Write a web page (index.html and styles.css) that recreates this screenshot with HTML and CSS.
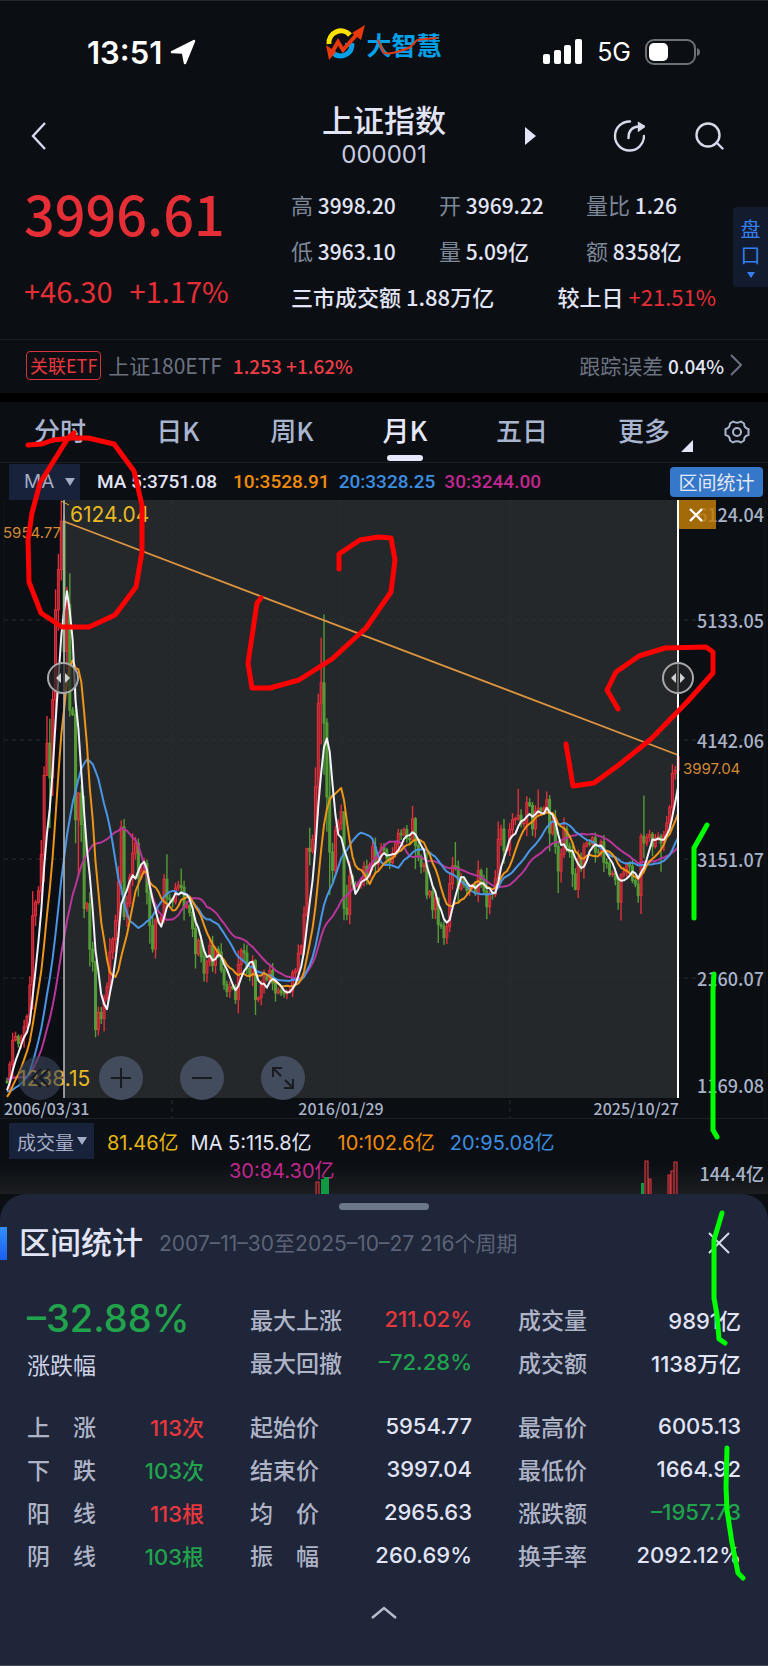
FILE: index.html
```html
<!DOCTYPE html>
<html lang="zh-CN">
<head>
    <meta charset="UTF-8">
    <meta name="viewport" content="width=device-width, initial-scale=1.0">
    <title>上证指数 000001</title>
    <link rel="stylesheet" href="styles.css">
</head>
<body>
<div class="app">

    <!-- 状态栏 -->
    <div class="status-bar">
        <div class="status-left">
            <span class="time">13:51</span>
            <svg width="26" height="26" viewBox="0 0 26 26"><path d="M2 13 L24 2 L15 24 L13 13.500 Z" fill="#fff" stroke="#fff" stroke-width="2.500" stroke-linejoin="round"/></svg>
        </div>
        <div class="logo">
            <svg width="40" height="38" viewBox="0 0 40 38" fill="none">
                <path d="M3 19 A12 12 0 0 1 24 10" stroke="#ffe100" stroke-width="5"/>
                <path d="M7 28 A11.500 11.500 0 0 0 26 19" stroke="#00a0e9" stroke-width="5"/>
                <path d="M28 20 H19" stroke="#00a0e9" stroke-width="4"/>
                <path d="M4 31 L12 17 L17 25 L32 8" stroke="#e8380d" stroke-width="4"/>
                <path d="M0 20 L3 35 L10 27 Z M26 8 L39 0 L35 15 Z" fill="#e8380d"/>
            </svg>
            <span class="logo-name">大智慧
                <svg class="logo-line" viewBox="0 0 76 26" fill="none"><path d="M12 9 L18 22 Q22 24 32 21 L44 17 L52 9 L72 7" stroke="#e8380d" stroke-width="2"/></svg>
            </span>
        </div>
        <div class="status-right">
            <svg width="40" height="26" viewBox="0 0 40 26" fill="#fff">
                <rect x="0" y="15" width="7" height="10" rx="2"/>
                <rect x="11" y="11" width="7" height="14" rx="2"/>
                <rect x="21" y="6" width="7" height="19" rx="2"/>
                <rect x="32" y="0" width="7" height="25" rx="2"/>
            </svg>
            <span class="net">5G</span>
            <svg width="56" height="26" viewBox="0 0 56 26">
                <rect x="1" y="1" width="49" height="24" rx="8" fill="none" stroke="#6d7074" stroke-width="2"/>
                <rect x="4" y="4" width="19" height="18" rx="5" fill="#fff"/>
                <path d="M52 9 Q55 10 55 13 Q55 16 52 17 Z" fill="#6d7074"/>
            </svg>
        </div>
    </div>

    <!-- 标题栏 -->
    <header class="title-bar">
        <button class="icon-btn back" aria-label="返回">
            <svg width="16" height="28" viewBox="0 0 16 28" fill="none" stroke="#d6daf0" stroke-width="2.4"><path d="M14 1 L2 14 L14 27"/></svg>
        </button>
        <div class="title">
            <h1>上证指数</h1>
            <p>000001</p>
        </div>
        <div class="title-actions">
            <button class="icon-btn next" aria-label="下一个">
                <svg width="11" height="18" viewBox="0 0 11 18"><path d="M0 0 L11 9 L0 18 Z" fill="#e2e5fb"/></svg>
            </button>
            <button class="icon-btn share" aria-label="分享">
                <svg width="32" height="32" viewBox="0 0 32 32" fill="none" stroke="#d6d9ea" stroke-width="2.4" stroke-linecap="round"><path d="M17 1.500 A14.500 14.500 0 1 0 31 16"/><path d="M15.500 18 Q15.500 7 26 6.500"/><path d="M26 3.500 L31 6.500 L26 10 Z" fill="#d6d9ea"/></svg>
            </button>
            <button class="icon-btn" aria-label="搜索">
                <svg width="29" height="28" viewBox="0 0 29 28" fill="none" stroke="#d6d9ea" stroke-width="2.4" stroke-linecap="round"><circle cx="13" cy="13" r="11.500"/><path d="M21.500 20.500 L27.500 26.500"/></svg>
            </button>
        </div>
    </header>

    <!-- 行情 -->
    <section class="quote">
        <div class="price-box">
            <div class="price">3996.61</div>
            <div class="change"><span>+46.30</span><span>+1.17%</span></div>
        </div>
        <div class="quote-grid">
            <div class="cell"><span>高</span> 3998.20</div>
            <div class="cell"><span>开</span> 3969.22</div>
            <div class="cell"><span>量比</span> 1.26</div>
            <div class="cell"><span>低</span> 3963.10</div>
            <div class="cell"><span>量</span> 5.09亿</div>
            <div class="cell"><span>额</span> 8358亿</div>
            <div class="total">
                <div>三市成交额 1.88万亿</div>
                <div>较上日 <b>+21.51%</b></div>
            </div>
        </div>
        <button class="pankou">盘<br>口<i class="caret"></i></button>
    </section>

    <a class="etf" href="#">
        <span class="tag">关联ETF</span>
        <span class="etf-name">上证180ETF</span>
        <span class="etf-value">1.253 +1.62%</span>
        <span class="etf-error">跟踪误差 <b>0.04%</b></span>
        <svg width="12" height="22" viewBox="0 0 12 22" fill="none" stroke="#6b7280" stroke-width="2"><path d="M1 1 L11 11 L1 21"/></svg>
    </a>

    <!-- 周期 -->
    <nav class="tabs">
        <button>分时</button>
        <button>日K</button>
        <button>周K</button>
        <button class="active">月K</button>
        <button>五日</button>
        <button class="more">更多</button>
        <button class="gear" aria-label="设置">
            <svg width="26" height="24" viewBox="0 0 26 24" fill="none" stroke="#a9b4cf" stroke-width="2" stroke-linejoin="round"><path d="M9 1.500 Q13 4 17 1.500 L20 3.500 Q20 8 24.500 9 V15 Q20 16 20 20.500 L17 22.500 Q13 20 9 22.500 L6 20.500 Q6 16 1.500 15 V9 Q6 8 6 3.500 Z"/><circle cx="13" cy="12" r="4"/></svg>
        </button>
    </nav>

    <div class="ma-row">
        <button class="pick">MA<i class="caret"></i></button>
        <span class="ma-5">MA 5:3751.08</span>
        <span class="orange">10:3528.91</span>
        <span class="blue">20:3328.25</span>
        <span class="pink">30:3244.00</span>
        <button class="range-btn">区间统计</button>
    </div>

    <!-- K线图 -->
    <div class="chart">
        <svg class="chart-svg" viewBox="0 0 768 618">
            <rect x="64" y="0" width="614" height="598" fill="#24282b"/>
            <g class="grid">
                <path d="M4 120 H765 M4 240 H765 M4 359 H765 M4 478 H765"/>
                <path d="M172 0 V618 M341 0 V618 M510 0 V618"/>
            </g>
            <path class="frame" d="M4 0 V618 M765 0 V618"/>
            <g id="candles"></g>
            <g id="lines" class="ma-lines"></g>
            <path d="M63 21 L678 255" stroke="#dd9440" stroke-width="1.800"/>
            <path d="M61 1 L69 5" stroke="#e2b51f"/>
            <path d="M64 0 V598" stroke="#b4b5b8" stroke-width="1.600"/>
            <path d="M678 0 V598" stroke="#fff" stroke-width="2"/>
            <g class="handle">
                <circle cx="63" cy="178" r="15"/><path d="M61 173 V183 L56 178 Z M65 173 V183 L70 178 Z"/>
                <circle cx="678" cy="178" r="15"/><path d="M676 173 V183 L671 178 Z M680 173 V183 L685 178 Z"/>
            </g>
            <text class="extreme" x="70" y="22">6124.04</text>
            <text class="extreme" x="18" y="586">1238.15</text>
            <text class="point" x="3" y="38">5954.77</text>
            <text class="point" x="683" y="274">3997.04</text>
            <g class="axis">
                <text x="764" y="22">6124.04</text>
                <text x="764" y="128">5133.05</text>
                <text x="764" y="248">4142.06</text>
                <text x="764" y="367">3151.07</text>
                <text x="764" y="486">2160.07</text>
                <text x="764" y="593">1169.08</text>
            </g>
            <g class="dates">
                <text x="4" y="615">2006/03/31</text>
                <text x="341" y="615" text-anchor="middle">2016/01/29</text>
                <text x="679" y="615" text-anchor="end">2025/10/27</text>
            </g>
        </svg>
        <button class="range-close" aria-label="关闭区间">
            <svg width="14" height="14" viewBox="0 0 14 14" stroke="#fff" stroke-width="2.400"><path d="M1 1 L13 13 M13 1 L1 13"/></svg>
        </button>
        <div class="chart-tools">
            <button class="faded" aria-label="收起"><svg width="22" height="22" viewBox="0 0 22 22"><path d="M12 2 L3 11 L12 20 M20 2 L11 11 L20 20"/></svg></button>
            <button aria-label="放大"><svg width="22" height="22" viewBox="0 0 22 22"><path d="M11 1 V21 M1 11 H21"/></svg></button>
            <button aria-label="缩小"><svg width="22" height="22" viewBox="0 0 22 22"><path d="M1 11 H21"/></svg></button>
            <button aria-label="全屏"><svg width="22" height="22" viewBox="0 0 22 22"><path d="M1 10 V1 H10 M1 1 L9 9 M21 12 V21 H12 M21 21 L13 13"/></svg></button>
        </div>
    </div>

    <!-- 成交量 -->
    <div class="volume">
        <button class="pick">成交量<i class="caret"></i></button>
        <div class="volume-values">
            <div><span class="yellow">81.46亿</span><span class="vol-ma">MA 5:115.8亿</span><span class="orange vol-10">10:102.6亿</span><span class="blue">20:95.08亿</span></div>
            <div class="pink vol-30">30:84.30亿</div>
        </div>
        <span class="vol-axis">144.4亿</span>
        <svg class="vol-bars" viewBox="0 0 768 40">
            <path d="M321 25 h3 v15 h-3 Z M324 23 h5 v17 h-5 Z M641 29 h3 v11 h-3 Z" fill="#0f9a43"/>
            <path d="M316 41 V28 h3 V41 M645 41 V7 h3 V41 M649 41 V25 h2 V41 M668 41 V21 h2 V41 M671 41 V17 h3 V41 M674 41 V8 h3 V41" fill="#3a1a1e" stroke="#c9363c" stroke-width="1.200"/>
        </svg>
    </div>

    <!-- 区间统计面板 -->
    <section class="sheet">
        <div class="grip"></div>
        <div class="sheet-head">
            <h2>区间统计</h2>
            <p>2007–11–30至2025–10–27 216个周期</p>
            <button class="icon-btn" aria-label="关闭">
                <svg width="22" height="22" viewBox="0 0 22 22" stroke="#d6d9ea" stroke-width="2"><path d="M1 1 L21 21 M21 1 L1 21"/></svg>
            </button>
        </div>
        <div class="stats top">
            <div class="range-change">
                <strong class="down">–32.88%</strong>
                <span>涨跌幅</span>
            </div>
            <dl>
                <div><dt>最大上涨</dt><dd class="up">211.02%</dd></div>
                <div><dt>最大回撤</dt><dd class="down">–72.28%</dd></div>
            </dl>
            <dl>
                <div><dt>成交量</dt><dd>9891亿</dd></div>
                <div><dt>成交额</dt><dd>1138万亿</dd></div>
            </dl>
        </div>
        <div class="stats">
            <dl>
                <div><dt>上　涨</dt><dd class="up">113次</dd></div>
                <div><dt>下　跌</dt><dd class="down">103次</dd></div>
                <div><dt>阳　线</dt><dd class="up">113根</dd></div>
                <div><dt>阴　线</dt><dd class="down">103根</dd></div>
            </dl>
            <dl>
                <div><dt>起始价</dt><dd>5954.77</dd></div>
                <div><dt>结束价</dt><dd>3997.04</dd></div>
                <div><dt>均　价</dt><dd>2965.63</dd></div>
                <div><dt>振　幅</dt><dd>260.69%</dd></div>
            </dl>
            <dl>
                <div><dt>最高价</dt><dd>6005.13</dd></div>
                <div><dt>最低价</dt><dd>1664.92</dd></div>
                <div><dt>涨跌额</dt><dd class="down">–1957.73</dd></div>
                <div><dt>换手率</dt><dd>2092.12%</dd></div>
            </dl>
        </div>
        <button class="icon-btn expand" aria-label="展开">
            <svg width="26" height="14" viewBox="0 0 26 14" fill="none" stroke="#b9bdcc" stroke-width="2.400"><path d="M1 12 L13 2 L25 12"/></svg>
        </button>
    </section>

    <!-- 手绘标注 -->
    <svg class="marks" viewBox="0 0 768 1666">
        <g stroke="#ff0000">
            <path d="M28 445 L42 444 L53 440 L72 438 H88 L114 444 L134 471 L142 505 V552 L136 587 L115 615 L89 627 H62 L41 613 L29 582 L28 540 L32 513 L40 483 L68 438 L74 433"/>
            <path d="M339 569 V554 L360 540 L378 537 L391 538 L395 560 L391 592 L366 628 L332 659 L299 680 L270 688 H252 L248 663 L257 603 L261 598"/>
            <path d="M618 709 L607 690 L616 672 L639 656 L665 648 L706 647 L713 652 V673 L688 701 L651 739 L620 764 L594 783 L573 786 L566 744"/>
        </g>
        <g stroke="#00ff00">
            <path d="M707 825 L694 848 V918"/>
            <path d="M714 974 L713 990 V1130 L717 1137"/>
            <path d="M722 1213 L714 1240 V1298 L717 1315 L719 1339 L725 1343"/>
            <path d="M727 1448 L726 1487 L727 1510 L732 1543 L738 1573 L743 1578"/>
        </g>
    </svg>
</div>
<script src="chart.js"></script>
</body>
</html>
```
FILE: styles.css
```css
* {
    box-sizing: border-box;
}

body {
    margin: 0;
    background-color: #0b0e13;
    color: #e2e5f7;
    font-family: "Noto Sans CJK SC", sans-serif;
}

h1, h2, p, dl, dd {
    margin: 0;
    font-weight: 500;
}

button {
    font-family: inherit;
    border: none;
    background: none;
    padding: 0;
    color: inherit;
    cursor: pointer;
}

svg {
    display: block;
}

.app {
    position: relative;
    border-top: 1px solid #24272c;
}

.orange { color: #f08c0c; }
.blue { color: #3b8fe0; }
.pink { color: #c0278f; }
.yellow { color: #e5b710; }
.up { color: #e8383d; }
.down { color: #21a34c; }

.caret {
    display: inline-block;
    border: 5px solid transparent;
    border-top: 8px solid currentColor;
    border-bottom: 0;
}

.icon-btn {
    flex: none;
}

/* 状态栏 */
.status-bar {
    display: grid;
    grid-template-columns: 1fr auto 1fr;
    align-items: center;
    height: 95px;
    padding: 7px 67px 0;
    font-family: Inter, sans-serif;
}

.status-left, .status-right {
    display: flex;
    align-items: center;
    height: 40px;
}

.status-left {
    gap: 8px;
    padding-left: 20px;
}

.status-right {
    justify-content: flex-end;
    gap: 14px;
}

.time {
    font-size: 31px;
    font-weight: 600;
    color: #fff;
}

.net {
    font-size: 25px;
    color: #fff;
}

.logo {
    display: flex;
    align-items: center;
    margin-bottom: 17px;
}

.logo-name {
    position: relative;
    color: #00a0e9;
    font-family: "Noto Sans CJK SC", sans-serif;
    font-size: 25px;
    line-height: 30px;
    font-weight: 700;
    white-space: nowrap;
}

.logo-line {
    position: absolute;
    left: 0;
    top: 2px;
    width: 100%;
}

/* 标题栏 */
.title-bar {
    display: grid;
    grid-template-columns: 1fr auto 1fr;
    align-items: center;
    height: 84px;
    padding: 0 44px 4px 31px;
}

.back {
    justify-self: start;
}

.title {
    text-align: center;
    padding: 0 0 6px 13px;
}

.title h1 {
    font-size: 31px;
    line-height: 44px;
}

.title p {
    font-family: Inter, sans-serif;
    font-size: 24px;
    line-height: 28px;
    font-weight: 400;
    color: #c8cce0;
}

.title-actions {
    display: flex;
    align-items: center;
    justify-content: flex-end;
}

.next {
    margin-right: 77px;
}

.share {
    margin-right: 50px;
}

/* 行情 */
.quote {
    position: relative;
    display: grid;
    grid-template-columns: 291fr 477fr;
    height: 160px;
    border-bottom: 1px solid #1a1d22;
}

.price-box {
    padding-left: 24px;
    color: #e62e36;
}

.price {
    font-size: 54px;
    line-height: 66px;
    font-weight: 500;
}

.change {
    display: flex;
    gap: 17px;
    margin-top: 20px;
    font-size: 29px;
    line-height: 48px;
}

.quote-grid {
    display: grid;
    grid-template-columns: 148fr 147fr 182fr;
    grid-auto-rows: 46px;
    align-items: center;
    padding-top: 1px;
    font-size: 21px;
    font-weight: 500;
    white-space: nowrap;
}

.cell span {
    color: #7c8798;
    font-size: 22px;
    font-weight: 400;
}

.total {
    grid-column: 1 / 4;
    display: flex;
    justify-content: space-between;
    padding-right: 52px;
    font-size: 22px;
}

.total b {
    font-size: 22px;
    font-weight: 400;
    color: #e62e36;
}

.pankou {
    position: absolute;
    right: 0;
    top: 27px;
    width: 35px;
    height: 80px;
    border-radius: 4px 0 0 4px;
    background-color: #131b2e;
    color: #3580f0;
    font-size: 20px;
    line-height: 26px;
}

.pankou .caret {
    display: block;
    width: 8px;
    margin: 4px auto 0;
    border-width: 6px 4px 0;
}

.etf {
    display: flex;
    align-items: center;
    height: 53px;
    padding: 0 26px 3px;
    color: #6b7280;
    font-size: 21px;
    text-decoration: none;
}

.tag {
    border: 1px solid #d5343a;
    border-radius: 4px;
    padding: 0 3px;
    margin-right: 7px;
    color: #e8383d;
    font-size: 18px;
    line-height: 27px;
}

.etf-value {
    margin-left: 11px;
    color: #f03e46;
    font-size: 19px;
    font-weight: 500;
}

.etf-error {
    margin-left: auto;
    margin-right: 6px;
}

.etf-error b {
    color: #e2e5f7;
    font-size: 19px;
    font-weight: 500;
}

/* 周期 */
.tabs {
    display: grid;
    grid-template-columns: 120fr 116fr 112fr 114fr 120fr 124fr 62fr;
    border-top: 9px solid #000;
    border-bottom: 1px solid #1a1e25;
    height: 70px;
}

.tabs button {
    position: relative;
    padding-bottom: 6px;
    color: #a9b4cf;
    font-size: 26px;
    font-weight: 500;
}

.tabs .active {
    color: #e6e9fc;
    font-size: 27px;
}

.tabs .active::after {
    content: "";
    position: absolute;
    left: 50%;
    bottom: 1px;
    width: 36px;
    height: 6px;
    margin-left: -18px;
    border-radius: 3px;
    background-color: #e6e9fc;
}

.tabs .more::after {
    content: "";
    position: absolute;
    right: 13px;
    bottom: 10px;
    border-left: 12px solid transparent;
    border-bottom: 12px solid #e2e5f7;
}

.tabs .gear svg {
    margin: 6px auto 0;
}

.ma-row {
    display: flex;
    align-items: center;
    height: 37px;
    padding: 0 5px 0 9px;
    font-family: Roboto, sans-serif;
    font-size: 19px;
    font-weight: 500;
    white-space: nowrap;
}

.ma-row .orange { margin: 0 9px 0 16px; }
.ma-row .blue { margin-right: 9px; }

.pick {
    display: flex;
    align-items: center;
    flex: none;
    height: 36px;
    background-color: #18223a;
    color: #a3acc4;
}

.ma-row .pick {
    width: 71px;
    margin-right: 17px;
    padding-left: 15px;
    gap: 11px;
    font-family: Inter, sans-serif;
    font-size: 19px;
}

.range-btn {
    margin-left: auto;
    width: 93px;
    height: 30px;
    border-radius: 4px;
    background-color: #3577c8;
    color: #e2e8f7;
    font-family: "Noto Sans CJK SC", sans-serif;
    font-size: 19px;
    line-height: 28px;
}

/* K线图 */
.chart {
    position: relative;
    border-bottom: 1px solid #1a1e25;
}

.chart-svg {
    width: 100%;
    overflow: visible;
}

.grid path {
    stroke: #2b2f33;
    stroke-dasharray: 4 4;
}

.frame {
    stroke: #15191f;
}

.candle-up {
    stroke: #e32f3c;
    fill: #a02631;
}

.candle-down {
    stroke: #549c37;
    fill: #549c37;
}

.ma-lines path {
    fill: none;
    stroke-width: 2;
    stroke-linejoin: round;
}

.handle circle {
    fill: rgba(35, 35, 38, 0.7);
    stroke: #a9a9ac;
    stroke-width: 2;
}

.handle path {
    fill: #d0d0d0;
}

.extreme {
    fill: #e8b922;
    font-family: Inter, sans-serif;
    font-size: 21px;
}

.point {
    fill: #d18a35;
    font-family: Inter, sans-serif;
    font-size: 15px;
}

.axis text {
    fill: #a9b3c9;
    font-size: 18px;
    font-weight: 500;
    text-anchor: end;
}

.dates text {
    fill: #a9b3c9;
    font-size: 16px;
    font-weight: 500;
}

.range-close {
    position: absolute;
    left: 88.4%;
    top: 0;
    width: 37px;
    height: 29px;
    background-color: rgba(190, 122, 8, 0.85);
}

.range-close svg {
    margin: 0 0 0 10px;
}

.chart-tools {
    position: absolute;
    left: 18px;
    bottom: 18px;
    display: flex;
    gap: 37px;
}

.chart-tools button {
    width: 44px;
    height: 44px;
    border-radius: 50%;
    background-color: #434c5c;
}

.chart-tools .faded {
    background-color: rgba(60, 70, 92, 0.6);
}

.chart-tools svg {
    margin: 0 auto;
    fill: none;
    stroke: #181b20;
    stroke-width: 2;
}

/* 成交量 */
.volume {
    position: relative;
    display: flex;
    align-items: flex-start;
    height: 75px;
    padding: 4px 4px 0 9px;
    background: linear-gradient(#0b0e13 60%, #1b1d20);
    font-family: Inter, "Noto Sans CJK SC", sans-serif;
    font-size: 20px;
    line-height: 28px;
    white-space: nowrap;
}

.volume .pick {
    width: 85px;
    padding-left: 8px;
    gap: 3px;
    font-size: 19px;
}

.volume-values {
    padding: 6px 0 0 13px;
}

.vol-ma { margin-left: 12px; }
.vol-10 { margin: 0 15px 0 26px; }
.vol-30 { padding-left: 122px; }

.vol-axis {
    margin: 36px 0 0 auto;
    color: #a9b3c9;
    font-family: "Noto Sans CJK SC", sans-serif;
    font-size: 18px;
    font-weight: 500;
}

.vol-bars {
    position: absolute;
    left: 0;
    bottom: 0;
    width: 100%;
}

/* 区间统计面板 */
.sheet {
    position: relative;
    padding-top: 9px;
    border-radius: 26px 26px 0 0;
    border-bottom: 1px solid #454b5a;
    background-color: #1f263a;
    font-family: Inter, "Noto Sans CJK SC", sans-serif;
}

.grip {
    width: 90px;
    height: 7px;
    margin: 0 auto;
    border-radius: 4px;
    background-color: #6b788a;
}

.sheet-head {
    display: flex;
    align-items: center;
    height: 66px;
    padding-right: 38px;
}

.sheet-head::before {
    content: "";
    width: 7px;
    height: 33px;
    margin-right: 12px;
    background: linear-gradient(#3390fb, #1a5ff0);
}

.sheet-head h2 {
    font-size: 31px;
    line-height: 40px;
}

.sheet-head p {
    margin-left: 16px;
    padding-bottom: 3px;
    color: #5c6377;
    font-size: 21px;
    font-weight: 400;
}

.sheet-head button {
    margin-left: auto;
}

.stats {
    display: grid;
    grid-template-columns: 177fr 222fr 223fr;
    gap: 46px;
    padding: 0 27px;
    font-size: 22px;
}

.stats.top {
    margin: 21px 0 11px;
}

.stats dl > div {
    display: flex;
    justify-content: space-between;
    align-items: center;
    height: 43px;
    white-space: nowrap;
}

.stats dt {
    color: #aeb3c6;
    font-size: 23px;
}

.range-change strong {
    display: block;
    font-size: 38px;
    line-height: 42px;
    font-weight: 500;
}

.range-change span {
    display: block;
    font-size: 23px;
    line-height: 54px;
    color: #cdd1e3;
}

.expand {
    display: block;
    width: 100%;
    padding: 30px 0 45px;
}

.expand svg {
    margin: 0 auto;
}

.marks {
    position: absolute;
    left: 0;
    top: -1px;
    width: 100%;
    pointer-events: none;
    fill: none;
    stroke-width: 5;
    stroke-linecap: round;
    stroke-linejoin: round;
}
```
FILE: chart.js
```js
// 月收盘价，2003/10 起；图上从 2006/03 开始画，前面的只用于算均线
var closes = [
    1348, 1397, 1497,
    1590, 1675, 1741, 1595, 1555, 1399, 1386, 1342, 1396, 1320, 1340, 1266,
    1191, 1306, 1181, 1159, 1060, 1080, 1083, 1162, 1155, 1092, 1099, 1161,
    1258, 1299, 1298, 1440, 1641, 1672, 1612, 1658, 1752, 1837, 2099, 2675,
    2786, 2881, 3183, 3841, 4109, 3820, 4471, 5218, 5552, 5954, 4871, 5261,
    4383, 4348, 3472, 3693, 3433, 2736, 2775, 2397, 2293, 1728, 1871, 1820,
    1990, 2082, 2373, 2477, 2632, 2959, 3412, 2667, 2779, 2995, 3195, 3277,
    2989, 3051, 3109, 2870, 2592, 2398, 2637, 2638, 2655, 2978, 2820, 2808,
    2790, 2905, 2928, 2911, 2743, 2762, 2701, 2567, 2359, 2468, 2333, 2199,
    2292, 2428, 2262, 2396, 2372, 2225, 2103, 2047, 2086, 2068, 1980, 2269,
    2385, 2365, 2236, 2177, 2300, 1979, 1993, 2098, 2174, 2141, 2220, 2115,
    2033, 2056, 2033, 2026, 2039, 2048, 2201, 2217, 2363, 2420, 2682, 3234,
    3210, 3310, 3747, 4441, 4611, 4277, 3663, 3205, 3052, 3382, 3445, 3539,
    2737, 2687, 3003, 2938, 2916, 2929, 2979, 3085, 3004, 3100, 3250, 3103,
    3159, 3241, 3222, 3154, 3117, 3192, 3273, 3360, 3348, 3393, 3317, 3307,
    3480, 3259, 3168, 3082, 3095, 2847, 2876, 2725, 2821, 2602, 2588, 2493,
    2584, 2940, 3090, 3078, 2898, 2978, 2932, 2886, 2905, 2929, 2871, 3050,
    2976, 2880, 2750, 2860, 2852, 2984, 3310, 3395, 3218, 3224, 3391, 3473,
    3483, 3509, 3441, 3446, 3615, 3591, 3397, 3543, 3568, 3547, 3563, 3639,
    3361, 3462, 3252, 3047, 3186, 3398, 3253, 3202, 3024, 2893, 3151, 3089,
    3255, 3279, 3272, 3323, 3204, 3202, 3291, 3119, 3110, 3018, 3029, 2974,
    2788, 3015, 3041, 3104, 3086, 2967, 2938, 2842, 3336, 3279, 3326, 3351,
    3250, 3320, 3335, 3279, 3347, 3444, 3573, 3857, 3882, 3997
];
var START = 29;

// 影线较长的月份: [最高, 最低]
var extremes = {
    '2007-5': [4335, 3845], '2007-6': [4312, 3404], '2007-10': [6124, 5462], '2007-11': [6005, 4778],
    '2008-1': [5522, 4330], '2008-4': [3705, 2990], '2008-10': [2302, 1664], '2009-8': [3478, 2639],
    '2009-11': [3361, 2923], '2010-7': [2656, 2319], '2010-11': [3186, 2758], '2011-4': [3067, 2870],
    '2012-2': [2478, 2253], '2013-2': [2444, 2289], '2013-6': [2313, 1849], '2014-12': [3239, 2665],
    '2015-1': [3406, 3095], '2015-5': [4986, 4099], '2015-6': [5178, 3847], '2015-7': [4317, 3373],
    '2015-8': [4006, 2850], '2016-1': [3538, 2638], '2016-2': [2933, 2638], '2018-1': [3587, 3314],
    '2018-2': [3495, 3062], '2018-10': [2827, 2449], '2019-1': [2630, 2440], '2019-4': [3288, 3050],
    '2020-3': [3074, 2646], '2020-7': [3458, 2984], '2021-2': [3731, 3465], '2021-9': [3723, 3516],
    '2021-12': [3708, 3550], '2022-4': [3287, 2863], '2022-10': [3069, 2885], '2024-1': [2975, 2724],
    '2024-2': [3028, 2635], '2024-9': [3358, 2689], '2024-10': [3674, 3152], '2025-4': [3357, 3040]
};

function px(i) {
    return 7 + (i - START) * 2.856;
}

function py(price) {
    return 120 + (5133 - price) * 0.1203;
}

function drawCandles() {
    var html = '';
    for (var i = START; i < closes.length; i++) {
        var open = closes[i - 1];
        var close = closes[i];
        var month = i + 9;
        var key = (2003 + Math.floor(month / 12)) + '-' + (month % 12 + 1);
        var wick = 20 + Math.abs(close - open) * 0.2;
        var high = Math.max(open, close) + wick * (1 + i % 3) / 2;
        var low = Math.min(open, close) - wick * (1 + i % 4) / 2;
        if (extremes[key]) {
            high = extremes[key][0];
            low = extremes[key][1];
        }
        var top = py(Math.max(open, close));
        var height = Math.max(1, Math.abs(py(open) - py(close)));
        html += '<g class="' + (close >= open ? 'candle-up' : 'candle-down') + '">' +
            '<path stroke-width="1.400" d="M' + px(i) + ' ' + py(high) + ' V' + py(low) + '"/>' +
            '<rect x="' + (px(i) - 1) + '" y="' + top + '" width="2" height="' + height + '"/></g>';
    }
    document.getElementById('candles').innerHTML = html;
}

function maPath(n, color) {
    var d = '';
    for (var i = START; i < closes.length; i++) {
        var sum = 0;
        for (var j = 0; j < n; j++) {
            sum += closes[Math.max(0, i - j)];
        }
        d += (d ? ' L' : 'M') + px(i).toFixed(1) + ' ' + py(sum / n).toFixed(1);
    }
    return '<path d="' + d + '" stroke="' + color + '"/>';
}

drawCandles();
document.getElementById('lines').innerHTML =
    maPath(30, '#b8359a') + maPath(20, '#4a96e6') + maPath(10, '#ee9416') + maPath(5, '#f2f2f8');
```
